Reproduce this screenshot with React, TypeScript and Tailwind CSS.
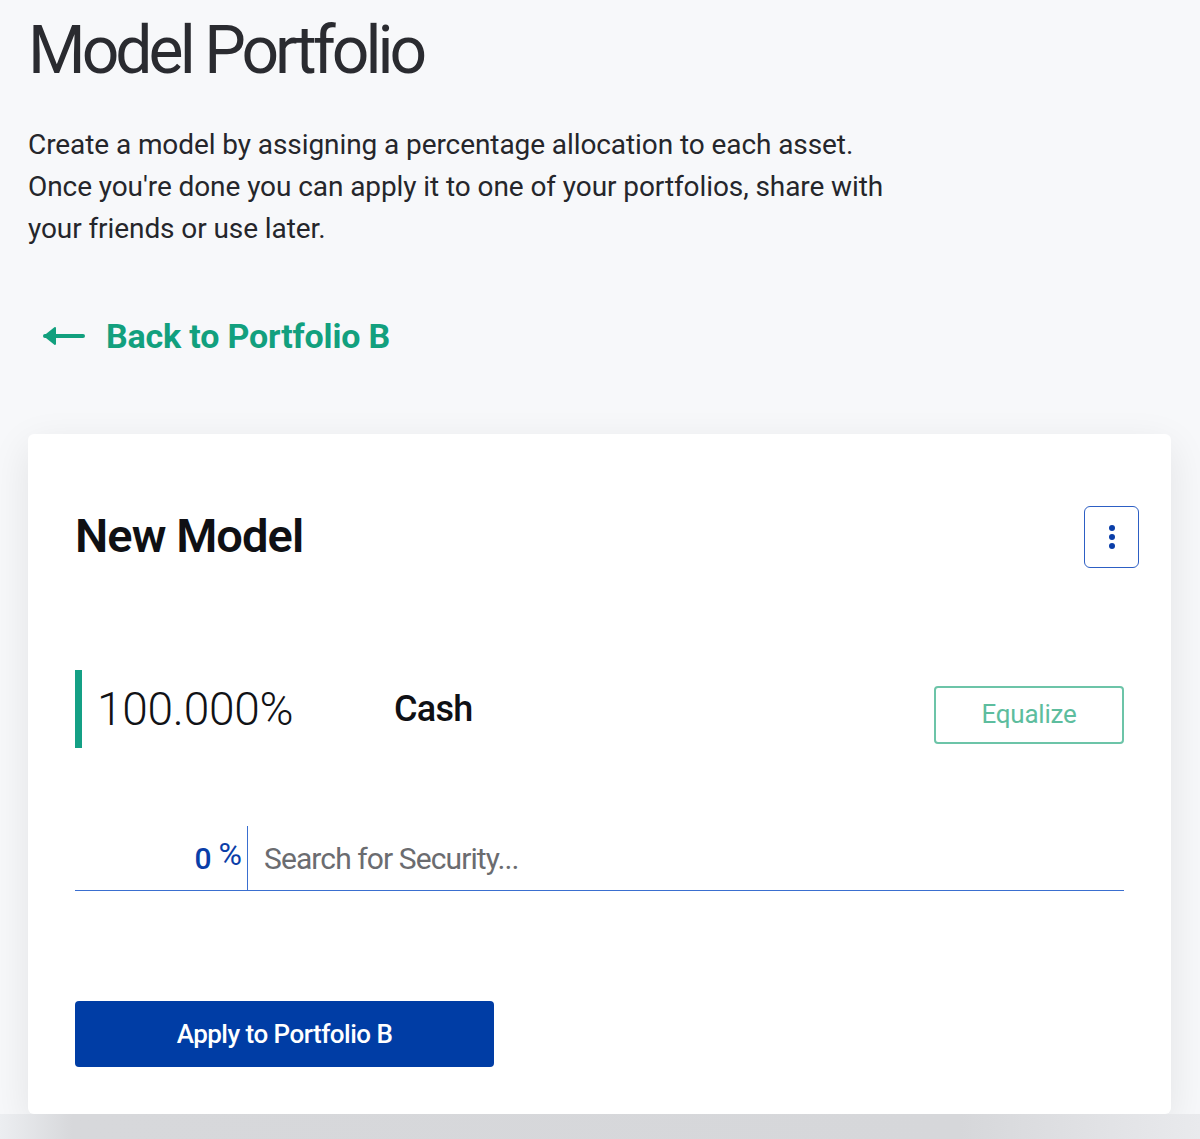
import React from 'react';

const font = { fontFamily: 'Roboto, "Liberation Sans", sans-serif' };

const ArrowLeft: React.FC = () => (
  <svg width="42" height="20" viewBox="0 0 42 20" fill="none">
    <path d="M2 10 H40" stroke="#12a07e" strokeWidth="4" strokeLinecap="round" />
    <path d="M12 2 L2 10 L12 18 Z" fill="#12a07e" stroke="#12a07e" strokeWidth="2" strokeLinejoin="round" />
  </svg>
);

const App: React.FC = () => {
  return (
    <div className="min-h-screen bg-[#f7f8fa]" style={font}>
      <div className="px-[28px] pt-[13px]">
        <h1 className="text-[66px] leading-[76px] font-normal tracking-[-0.06em] text-[#2a2b30]">Model Portfolio</h1>

        <p className="mt-[35px] text-[28px] leading-[42px] tracking-[-0.003em] text-[#25262b]">
          Create a model by assigning a percentage allocation to each asset.
          <br />
          Once you're done you can apply it to one of your portfolios, share with
          <br />
          your friends or use later.
        </p>

        <a href="#" className="mt-[66px] ml-[15px] flex items-center gap-[21px] text-[#12a07e]">
          <ArrowLeft />
          <span className="text-[34px] font-bold leading-[40px] tracking-[-0.005em]">Back to Portfolio B</span>
        </a>

        <div className="mt-[78px] mr-[1px] rounded-[6px] bg-white px-[47px] pt-[73px] pb-[47px] shadow-[0_12px_40px_rgba(0,0,0,0.09)]">
          <div className="flex items-start justify-between">
            <h2 className="text-[47px] font-semibold leading-[58px] tracking-[-0.02em] text-[#0f1014]">New Model</h2>
            <button className="-mt-[1px] -mr-[15px] flex h-[62px] w-[55px] flex-col items-center justify-center gap-[3px] rounded-[6px] border border-[#2d5fc4] bg-white">
              <span className="h-[6px] w-[6px] rounded-full bg-[#0a3ea8]" />
              <span className="h-[6px] w-[6px] rounded-full bg-[#0a3ea8]" />
              <span className="h-[6px] w-[6px] rounded-full bg-[#0a3ea8]" />
            </button>
          </div>

          <div className="mt-[102px] flex items-center">
            <div className="h-[78px] w-[7px] bg-[#14a085]" />
            <span className="ml-[15px] w-[297px] text-[46px] font-light leading-[50px] tracking-[-0.005em] text-[#111216]">100.000%</span>
            <span className="text-[36px] font-medium leading-[44px] tracking-[-0.02em] text-[#0f1014]">Cash</span>
            <button className="ml-auto mt-[11px] h-[58px] w-[190px] rounded-[4px] border-2 border-[#6cc4a8] text-[26px] font-normal tracking-[-0.01em] text-[#5dbd9e]">
              Equalize
            </button>
          </div>

          <div className="mt-[78px] flex h-[65px] items-stretch border-b border-[#3a6fd0]">
            <div className="flex w-[173px] items-end justify-end border-r border-[#3a6fd0] pb-[14px] pr-[5px]">
              <span className="text-[30px] font-medium leading-[34px] text-[#0a3ea8]">0</span>
              <span className="mb-[5px] ml-[7px] text-[32px] leading-[34px] text-[#0a3ea8]">%</span>
            </div>
            <div className="flex items-end pb-[12px] pl-[16px] text-[30px] leading-[38px] tracking-[-0.03em] text-[#6b6c70]">
              Search for Security...
            </div>
          </div>

          <button className="mt-[110px] flex h-[66px] w-[419px] items-center justify-center rounded-[4px] bg-[#003da5] text-[26px] font-medium tracking-[-0.02em] text-white">
            Apply to Portfolio B
          </button>
        </div>
      </div>
      <div className="h-[25px] bg-[linear-gradient(90deg,#eceef1_0%,#d7d8db_6%,#d6d7da_80%,#e9eaed_100%)]" />
    </div>
  );
};

export default App;
